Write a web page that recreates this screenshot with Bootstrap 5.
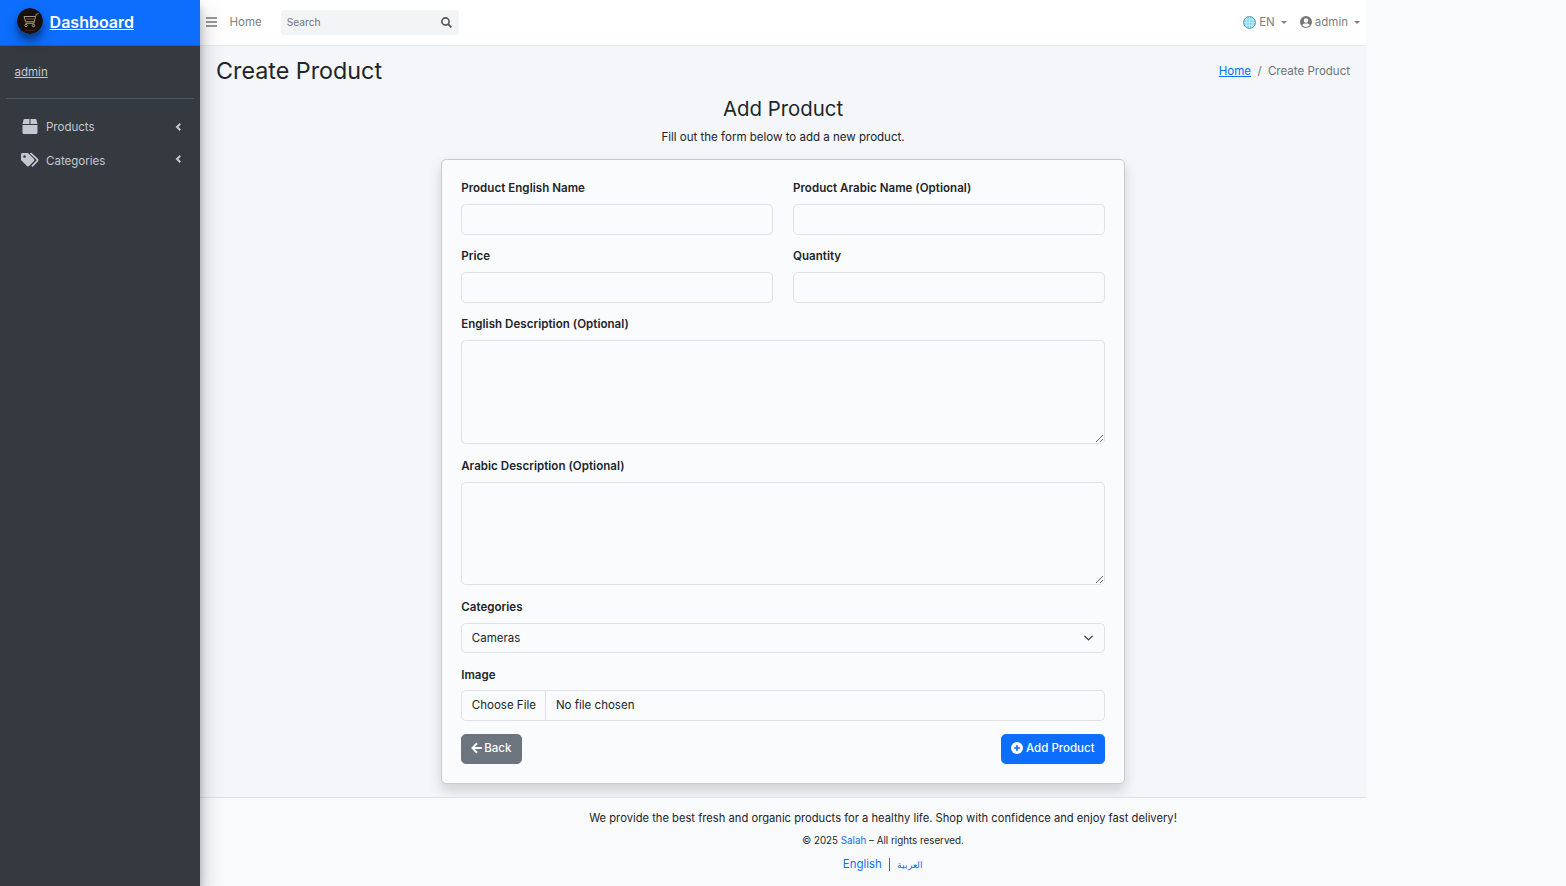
<!DOCTYPE html>
<html lang="en">
<head>
<meta charset="utf-8">
<meta name="viewport" content="width=device-width, initial-scale=1">
<title>Create Product</title>
<link href="https://cdn.jsdelivr.net/npm/bootstrap@5.3.0/dist/css/bootstrap.min.css" rel="stylesheet">
<style>
html{font-size:12.8px}
body{font-family:Inter,"Noto Sans",sans-serif;font-size:11.52px;line-height:18px;background:#f9fafc;height:886px;overflow:hidden}
.side{width:200px;flex:none;background:#343a40;box-shadow:0 11px 22px rgba(0,0,0,.25),0 8px 8px rgba(0,0,0,.22);z-index:3;color:#c2c7d0}
.side a{color:#c2c7d0}
.brand{height:46px;background:#0d6efd;border-bottom:1px solid #4b545c;padding:0 0 2px 17px;gap:6.600px}
.side .brand a{color:#fff;font-size:16px;font-weight:600;line-height:24px;letter-spacing:0}
.logo{width:26px;height:26px;margin-top:-2px;border-radius:50%;box-shadow:0 8px 13px rgba(0,0,0,.3),0 5px 5px rgba(0,0,0,.25)}
.who{margin:0 6px;height:53px;padding:17px 8px 0 8.500px;border-bottom:1px solid #4f5962}
.menu{padding:11px 18px 0 20px}
.menu a{height:34px;text-decoration:none}
.menu .ic{width:20px;margin:0 6px 2px 0}
.main{width:1166px;flex:none}
.top{height:46px;background:#fff;border-bottom:1px solid #e6e8eb;color:#808080;padding:0 6px 1px}
.home-link{margin-left:12.5px}
.find{width:178px;height:25px;background:#f2f4f6;border-radius:3px;font-size:10.2px;padding:0 7px 0 6px;margin-left:19px;color:#6c757d}
.caret{border:3.2px solid transparent;border-top-color:#808080;border-bottom:0;margin-left:6px}
.user-ic{margin-left:13px}
.user-name{margin-left:3px}
.mid{background:#f4f6f9;height:751px}
.head{height:50px;padding:0 16px}
.head h1{font-size:23.3px;line-height:28px;font-weight:400;letter-spacing:0}
.sub{font-size:20.4px;line-height:26px;font-weight:400;margin:0 0 6px;letter-spacing:0}
.panel{width:684px;margin:13px auto 0;height:625px;background:#f9fbfd;border:1px solid #c9cccf;border-radius:5px;padding:19.2px 19.2px 18px;box-shadow:0 6.4px 12.8px rgba(0,0,0,.15)}
.pair{display:grid;grid-template-columns:1fr 1fr;column-gap:20px}
.panel label{display:block;font-weight:600;height:18px;margin-bottom:7px;letter-spacing:.05px}
.panel .form-control,.panel .form-select{background-color:#f9fbfd;font-size:11.52px;line-height:18px;height:31px;padding-left:9.6px;border-radius:4.8px;margin-bottom:12px}
.panel .form-select{height:30px;margin-bottom:13px;background-position:right 10px center;background-size:11px 10px}
.panel textarea.form-control{height:103.6px;margin-bottom:12.8px}
.panel .file-label{margin-bottom:6px}
.panel .filebox{margin-bottom:13px}
.filebox span:first-child{padding-right:9px;border-right:1px solid #dee2e6;line-height:28px}
.filebox span:last-child{padding-left:10px;line-height:28px}
.panel .btn{font-size:11.52px;font-weight:500;line-height:18px;height:30px;padding:0 9.2px 2px;border-radius:4.8px}
.panel .btn svg{margin-right:2.800px}
.panel .btn-secondary svg{margin-right:1.800px}
.foot{width:1366px}
.footline{height:89px;background:linear-gradient(#dee2e6,#dee2e6) 0 0/1166px 1px no-repeat #f9fafc}
.foot p{margin:0;padding-top:5px}
.foot .pitch{padding-top:12px;font-size:11.2px}
.foot a{text-decoration:none}
.foot .fine{font-size:9.8px}
.foot .langs{font-size:11.4px}
.bar{display:inline-block;width:1.500px;height:13px;background:#0d6efd;vertical-align:-3px;margin:0 7px}
.foot .ar{font-size:9px}
</style>
</head>
<body class="d-flex">
<aside class="side">
  <div class="brand d-flex align-items-center">
    <svg class="logo" viewBox="0 0 26 26"><circle cx="13" cy="13" r="13" fill="#17100b"/><path d="M8 22.500h10" stroke="#4a220e"/><g fill="none" stroke="#b9a58c" stroke-width=".9"><path d="M21.500 5.500l-2.300.8-2.400 9H8.500M7 8.500h11M7 8.500l1.600 5.300h8.600"/><path d="M9 11h8" stroke="#76624c"/><circle cx="9" cy="17.500" r="1.200"/><circle cx="16.500" cy="17.500" r="1.200"/></g></svg>
    <a href="#">Dashboard</a>
  </div>
  <div class="who"><a href="#">admin</a></div>
  <nav class="menu">
    <a href="#" class="d-flex align-items-center"><svg class="ic" height="15" viewBox="0 0 20 15"><path fill="#c2c7d0" d="M4.700 0h4.800v5H2.500l1-4Q3.800 0 4.700 0zM10.500 0h4.800q.9 0 1.200 1l1 4h-7zM2.500 6h15v7.500q0 1.500-1.500 1.500H4q-1.500 0-1.500-1.500z"/></svg><span>Products</span><svg class="ms-auto" width="8" height="10" viewBox="0 0 8 10"><path d="M6.300 1.700L3 5l3.300 3.300" fill="none" stroke="#c2c7d0" stroke-width="2"/></svg></a>
    <a href="#" class="d-flex align-items-center"><svg class="ic" height="16" viewBox="0 0 20 16"><path fill="#c2c7d0" fill-rule="evenodd" d="M1 2.500Q1 1 2.500 1H8l6 6q1 1 0 2l-5 5q-1 1-2 0L1 8zM4.500 3.200a1.300 1.300 0 1 0 .01 0z"/><path d="M10.500 1.200l6.600 6q1 1 0 2l-5.200 5.200" fill="none" stroke="#c2c7d0" stroke-width="1.700"/></svg><span>Categories</span><svg class="ms-auto mb-1" width="8" height="10" viewBox="0 0 8 10"><path d="M6.300 1.700L3 5l3.300 3.300" fill="none" stroke="#c2c7d0" stroke-width="2"/></svg></a>
  </nav>
</aside>
<div class="d-flex flex-column">
<main class="main">
  <div class="top d-flex align-items-center">
    <svg width="11" height="10" viewBox="0 0 11 10"><path d="M0 1h11M0 5h11M0 9h11" stroke="#777" stroke-width="1.600"/></svg>
    <span class="home-link">Home</span>
    <div class="find d-flex align-items-center justify-content-between"><span>Search</span><svg width="11" height="11" viewBox="0 0 11 11" fill="none" stroke="#555"><circle cx="4.500" cy="4.500" r="3.600" stroke-width="1.600"/><path d="M7.200 7.200l3.200 3.200" stroke-width="1.900"/></svg></div>
    <svg class="ms-auto" width="13" height="13" viewBox="0 0 13 13"><circle cx="6.500" cy="6.500" r="5.900" fill="#7dd9f5" stroke="#6c8f9c"/><path d="M6.500 1v11M1 6.500h11M2 3.800h9M2 9.200h9M4 1.500q-2 5 0 10M9 1.500q2 5 0 10" fill="none" stroke="#c3f0fc" stroke-width=".8"/></svg>
    <span class="ms-1">EN</span><i class="caret"></i>
    <svg class="user-ic" width="12" height="12" viewBox="0 0 12 12"><circle cx="6" cy="6" r="6" fill="#777"/><circle cx="6" cy="4.500" r="2.200" fill="#fff"/><path d="M2.200 9.200Q3 7.500 4.500 7.500h3q1.500 0 2.300 1.700Q8.300 10.900 6 10.900T2.200 9.200z" fill="#fff"/></svg>
    <span class="user-name">admin</span><i class="caret"></i>
  </div>
  <div class="mid">
    <div class="head d-flex align-items-center justify-content-between">
      <h1 class="m-0">Create Product</h1>
      <div class="text-secondary"><a href="#">Home</a><span class="mx-2">/</span>Create Product</div>
    </div>
    <div class="text-center"><h2 class="sub">Add Product</h2><div>Fill out the form below to add a new product.</div></div>
    <form class="panel">
      <div class="pair">
        <div><label>Product English Name</label><input class="form-control"></div>
        <div><label>Product Arabic Name (Optional)</label><input class="form-control"></div>
        <div><label>Price</label><input class="form-control"></div>
        <div><label>Quantity</label><input class="form-control"></div>
      </div>
      <label>English Description (Optional)</label><textarea class="form-control"></textarea>
      <label>Arabic Description (Optional)</label><textarea class="form-control"></textarea>
      <label>Categories</label><select class="form-select py-0"><option>Cameras</option></select>
      <label class="file-label">Image</label><div class="form-control filebox d-flex py-0"><span>Choose File</span><span>No file chosen</span></div>
      <div class="d-flex justify-content-between">
        <button type="button" class="btn btn-secondary d-flex align-items-center"><svg width="11" height="12" viewBox="0 0 11.500 12"><path d="M6.300 1L1.500 6l4.800 5M2 6h9.300" fill="none" stroke="#fff" stroke-width="2"/></svg><span>Back</span></button>
        <button type="button" class="btn btn-primary d-flex align-items-center"><svg width="12" height="12" viewBox="0 0 12 12"><circle cx="6" cy="6" r="6" fill="#fff"/><path d="M6 2.900v6.200M2.900 6h6.200" stroke="#0d6efd" stroke-width="1.600"/></svg><span>Add Product</span></button>
      </div>
    </form>
  </div>
</main>
<footer class="foot">
  <div class="footline text-center">
    <p class="pitch">We provide the best fresh and organic products for a healthy life. Shop with confidence and enjoy fast delivery!</p>
    <p class="fine">© 2025 <a href="#">Salah</a> – All rights reserved.</p>
    <p class="langs"><a href="#">English</a><span class="bar"></span><a href="#" lang="ar" class="ar">العربية</a></p>
  </div>
</footer>
</div>
<script src="https://cdn.jsdelivr.net/npm/bootstrap@5.3.0/dist/js/bootstrap.bundle.min.js"></script>
</body>
</html>
